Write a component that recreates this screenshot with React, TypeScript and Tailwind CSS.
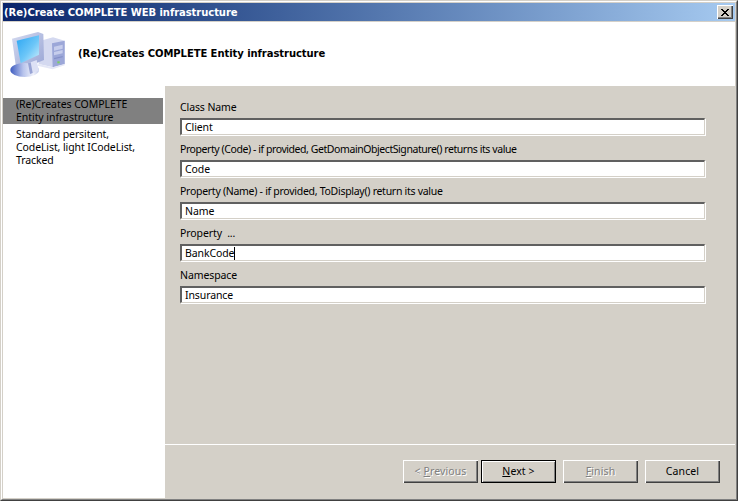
import React from "react";

const font = "font-['Noto_Sans','Liberation_Sans',sans-serif]";
const boldFont = "font-['DejaVu_Sans','Liberation_Sans',sans-serif] font-bold text-[10px] tracking-[-0.06px]";

function Field({ label, value, caret, track }: { label: string; value: string; caret?: boolean; track: string }) {
  return (
    <div className="flex flex-col h-[42px]">
      <div className={`h-[14px] leading-[14px] mb-[4px] text-black whitespace-pre ${track}`}>{label}</div>
      <div className="w-[525px] h-[17px] bg-white flex items-center pl-[3px] leading-[14px] tracking-[-0.1px] border-t-2 border-l-2 border-r border-b border-t-[#606060] border-l-[#606060] border-r-[#d4d0c8] border-b-[#d4d0c8] shadow-[1px_1px_0_#fff]">
        <span>{value}</span>
        {caret && <span className="w-px h-[13px] bg-black" />}
      </div>
    </div>
  );
}

function Btn({ children, disabled, primary }: { children: React.ReactNode; disabled?: boolean; primary?: boolean }) {
  const look = primary
    ? "border border-black shadow-[inset_1px_1px_0_#fff,inset_-1px_-1px_0_#808080]"
    : "shadow-[inset_1px_1px_0_#fff,inset_-1px_-1px_0_#404040,inset_-2px_-2px_0_#808080]";
  const text = disabled ? "text-[#808080] [text-shadow:1px_1px_0_#fff]" : "text-black";
  return <div className={`w-[75px] h-[23px] flex items-center justify-center whitespace-pre tracking-[0.1px] bg-[#d4d0c8] ${look} ${text}`}>{children}</div>;
}

function ComputerIcon() {
  return (
    <svg width="58" height="54" viewBox="0 0 174 162" className="ml-[5px] mt-[6px] shrink-0">
      <defs>
        <linearGradient id="scr" x1="0" y1="0" x2="1" y2="1">
          <stop offset="0" stopColor="#2aa5f2" />
          <stop offset="0.55" stopColor="#6cc6f8" />
          <stop offset="1" stopColor="#d2f0fc" />
        </linearGradient>
        <linearGradient id="base" x1="0" y1="0" x2="1" y2="0">
          <stop offset="0" stopColor="#3f5cc0" />
          <stop offset="0.45" stopColor="#b8c4ec" />
          <stop offset="0.8" stopColor="#f0f2fb" />
          <stop offset="1" stopColor="#c4cceb" />
        </linearGradient>
        <linearGradient id="frame" x1="0" y1="0" x2="1" y2="1">
          <stop offset="0" stopColor="#d4daf0" />
          <stop offset="1" stopColor="#98a4d4" />
        </linearGradient>
      </defs>
      <path d="M98 38 L135 28 L170 38 L170 108 L135 118 L92 108 Z" fill="#d4d9f0" />
      <path d="M132 46 L170 38 L170 108 L134 118 Z" fill="#9ca7d8" />
      <path d="M138 56 L164 50 L164 62 L138 68 Z M138 72 L164 66 L164 76 L138 82 Z" fill="#c6cdec" />
      <path d="M138 90 L164 84 L164 88 L138 94 Z" fill="#8490c8" />
      <rect x="148" y="100" width="7" height="6" fill="#78d060" />
      <path d="M92 108 L134 118 L170 108 L170 112 L134 124 L88 113 Z" fill="#e4e7f6" />
      <path d="M12 32 L90 12 L106 18 L108 96 L36 126 L24 118 Z" fill="url(#frame)" />
      <path d="M26 38 L93 22 L93 80 L38 106 Z" fill="url(#scr)" />
      <ellipse cx="50" cy="126" rx="43" ry="21" fill="url(#base)" />
      <path d="M60 106 L86 96 L92 128 L66 138 Z" fill="#dde1f5" />
      <path d="M60 106 L68 103 L74 135 L66 138 Z" fill="#97a3d4" />
    </svg>
  );
}

export default function App() {
  return (
    <div className={`${font} w-[738px] h-[501px] text-[10.5px] bg-[#d4d0c8] border-l border-t border-l-[#d4d0c8] border-t-[#d4d0c8] border-r border-b border-r-[#404040] border-b-[#404040]`}>
      <div className="w-full h-full border-l border-t border-l-white border-t-white border-r border-b border-r-[#808080] border-b-[#808080] p-[1px] flex flex-col">
        <div className={`h-[18px] mb-px flex items-center justify-between bg-gradient-to-r from-[#0a246a] to-[#a6caf0] pl-px pr-[2px] text-white ${boldFont}`}>
          <span>(Re)Create COMPLETE WEB infrastructure</span>
          <div className="w-4 h-[14px] bg-[#d4d0c8] flex items-center justify-center shadow-[inset_1px_1px_0_#fff,inset_-1px_-1px_0_#404040,inset_-2px_-2px_0_#808080]">
            <svg width="8" height="7" viewBox="0 0 8 7">
              <path d="M0 0h2v1h1v1h2V1h1V0h2v1H7v1H6v1H5v1h1v1h1v1h1v1H6V6H5V5H3v1H2v1H0V6h1V5h1V4h1V3H2V2H1V1H0z" fill="#000" />
            </svg>
          </div>
        </div>
        <div className="h-[64px] bg-white flex items-start">
          <ComputerIcon />
          <span className={`ml-[12px] mt-[25px] leading-[14px] text-black ${boldFont}`}>(Re)Creates COMPLETE Entity infrastructure</span>
        </div>
        <div className="flex-1 flex">
          <div className="w-[162px] bg-white pt-[12px]">
            <div className="w-[160px] h-[26px] bg-[#808080] pl-[13px] leading-[13px] text-black tracking-[-0.05px]">(Re)Creates COMPLETE<br />Entity infrastructure</div>
            <div className="pl-[13px] pt-[4px] leading-[13px] text-black tracking-[-0.1px]">Standard persitent,<br />CodeList, light ICodeList,<br />Tracked</div>
          </div>
          <div className="flex-1 flex flex-col">
            <div className="h-[358px] pl-[15px] pt-[14px] flex flex-col text-black">
              <Field track="tracking-[-0.1px]" label="Class Name" value="Client" />
              <Field track="tracking-[-0.43px]" label="Property (Code) - if provided, GetDomainObjectSignature() returns its value" value="Code" />
              <Field track="tracking-[-0.28px]" label="Property (Name) - if provided, ToDisplay() return its value" value="Name" />
              <Field track="tracking-[-0.1px]" label="Property  ..." value="BankCode" caret />
              <Field track="tracking-[-0.1px]" label="Namespace" value="Insurance" />
            </div>
            <div className="h-px bg-white" />
            <div className="flex-1 flex justify-end items-start pt-[15px] pr-[15px]">
              <Btn disabled><span>&lt; <span className="underline">P</span>revious</span></Btn>
              <div className="ml-[3px]"><Btn primary><span><span className="underline">N</span>ext &gt;</span></Btn></div>
              <div className="ml-[7px]"><Btn disabled><span><span className="underline">F</span>inish</span></Btn></div>
              <div className="ml-[7px]"><Btn>Cancel</Btn></div>
            </div>
          </div>
        </div>
      </div>
    </div>
  );
}
